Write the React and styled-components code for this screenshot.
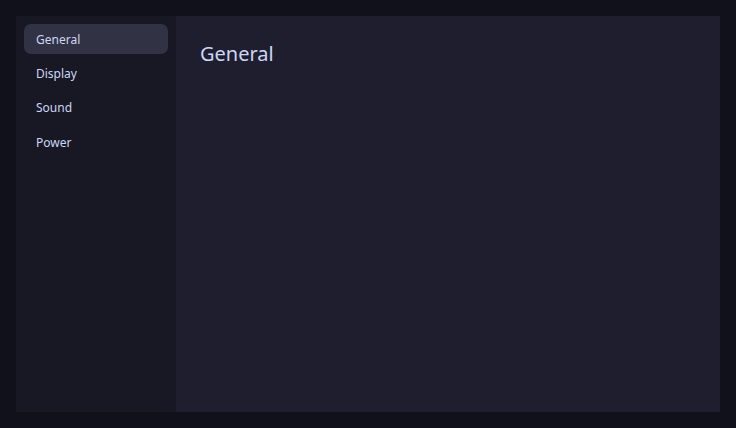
import React, { useState } from "react";
import styled, { createGlobalStyle } from "styled-components";

const Global = createGlobalStyle`
  html, body { margin: 0; padding: 0; background: #11111b; }
  body { font-family: "Noto Sans", "Open Sans", sans-serif; color: #cdd6f4; }
  * { box-sizing: border-box; }
`;

const Page = styled.div`
  width: 736px;
  height: 428px;
  padding: 16px;
  background: #11111b;
`;

const Window = styled.div`
  display: flex;
  height: 100%;
  background: #1e1e2e;
`;

const Sidebar = styled.nav`
  width: 160px;
  flex-shrink: 0;
  background: #181825;
  padding: 8px;
  display: flex;
  flex-direction: column;
  gap: 4px;
`;

const NavItem = styled.button`
  border: none;
  border-radius: 7px;
  padding: 7.5px 12px 6.7px;
  text-align: left;
  font-family: inherit;
  font-size: 12px;
  line-height: 16.2px;
  color: #cdd6f4;
  background: ${(p) => (p.$active ? "#313244" : "transparent")};
  cursor: pointer;
`;

const Content = styled.main`
  flex: 1;
  padding: 24px;
  background: #1e1e2e;
`;

const Title = styled.h1`
  margin: 0;
  font-size: 20px;
  font-weight: 400;
  line-height: 27px;
  color: #cdd6f4;
`;

const items = ["General", "Display", "Sound", "Power"];

export default function App() {
  const [active, setActive] = useState("General");
  return (
    <>
      <Global />
      <Page>
        <Window>
          <Sidebar>
            {items.map((it) => (
              <NavItem key={it} $active={it === active} onClick={() => setActive(it)}>
                {it}
              </NavItem>
            ))}
          </Sidebar>
          <Content>
            <Title>{active}</Title>
          </Content>
        </Window>
      </Page>
    </>
  );
}
